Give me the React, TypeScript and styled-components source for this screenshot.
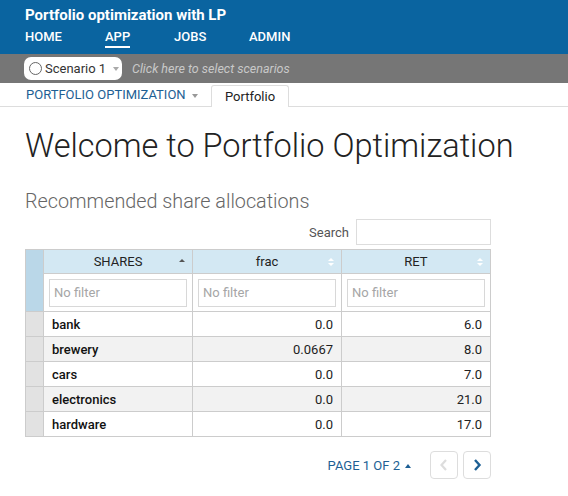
import React from "react";
import styled, { createGlobalStyle } from "styled-components";

const Global = createGlobalStyle`
  html, body { margin: 0; padding: 0; background: #fff; }
  body { font-family: Roboto, "Liberation Sans", sans-serif; color: #222; }
  * { box-sizing: border-box; }
`;

const Header = styled.div`
  background: #0a64a0;
  color: #fff;
  height: 54px;
  padding: 6px 0 0 25px;
`;

const Title = styled.div`
  font-size: 15px;
  font-weight: 700;
  line-height: 18px;
`;

const Nav = styled.div`
  display: flex;
  margin-top: 5px;
`;

const NavItem = styled.div<{ $active?: boolean; $w: number }>`
  width: ${(p) => p.$w}px;
  font-size: 13px;
  font-weight: 500;
  line-height: 16px;
  span {
    display: inline-block;
    padding-bottom: 1px;
    border-bottom: 2px solid ${(p) => (p.$active ? "#fff" : "transparent")};
  }
`;

const ScenarioBar = styled.div`
  background: #767676;
  height: 29px;
  display: flex;
  align-items: center;
  padding-left: 24px;
  gap: 10px;
`;

const Pill = styled.div`
  background: #fff;
  border-radius: 7px;
  height: 23px;
  width: 98px;
  display: flex;
  align-items: center;
  padding-left: 5px;
  font-size: 13px;
  color: #333;
  gap: 3px;
  white-space: nowrap;
`;

const Ring = styled.span`
  flex: none;
  width: 13px;
  height: 13px;
  border: 1.5px solid #666;
  border-radius: 50%;
`;

const Caret = styled.span<{ $color: string }>`
  display: inline-block;
  width: 0;
  height: 0;
  border-left: 3.5px solid transparent;
  border-right: 3.5px solid transparent;
  border-top: 4px solid ${(p) => p.$color};
  margin-left: 6px;
  vertical-align: middle;
`;

const Placeholder = styled.span`
  font-size: 12.5px;
  font-style: italic;
  color: #c9c9c9;
`;

const Tabs = styled.div`
  display: flex;
  align-items: flex-end;
  height: 24px;
  border-bottom: 1px solid #ddd;
  padding-left: 26px;
`;

const MenuTab = styled.div`
  font-size: 13px;
  color: #1d5f94;
  width: 185px;
  height: 100%;
  line-height: 24px;
`;

const Tab = styled.div`
  width: 78px;
  height: 22px;
  border: 1px solid #ddd;
  border-bottom: none;
  border-radius: 3px 3px 0 0;
  background: #fff;
  margin-bottom: -1px;
  text-align: center;
  font-size: 13px;
  line-height: 21px;
  color: #222;
`;

const Main = styled.div`
  padding: 20px 77px 0 25px;
`;

const H1 = styled.h1`
  margin: 0;
  font-size: 32.5px;
  font-weight: 300;
  line-height: 38px;
  color: #222;
  white-space: nowrap;
`;

const H2 = styled.h2`
  margin: 25px 0 0;
  font-size: 19.8px;
  font-weight: 300;
  line-height: 24px;
  color: #666;
`;

const SearchRow = styled.div`
  display: flex;
  justify-content: flex-end;
  align-items: center;
  gap: 7px;
  margin-top: 5px;
  font-size: 13px;
  color: #555;
`;

const SearchBox = styled.div`
  width: 135px;
  height: 26px;
  border: 1px solid #ddd;
`;

const Table = styled.table`
  margin-top: 4px;
  width: 100%;
  border-collapse: collapse;
  table-layout: fixed;
  font-size: 13px;
  td, th { border: 1px solid #ccc; padding: 0; }
`;

const IndexHead = styled.th`
  width: 18px;
  background: #bad7e8;
`;

const HeadCell = styled.th`
  background: #d3e8f3;
  height: 24px;
  font-weight: 400;
  position: relative;
  color: #222;
`;

const SortIcon = styled.svg`
  position: absolute;
  right: 6px;
  top: 7px;
`;

const FilterCell = styled.td`
  height: 38px;
  padding: 0 5px !important;
`;

const FilterInput = styled.div`
  height: 28px;
  border: 1px solid #d8d8d8;
  font-size: 13px;
  color: #a6a6a6;
  line-height: 26px;
  padding-left: 4px;
`;

const IndexCell = styled.td`
  background: #e2e2e2;
`;

const Row = styled.tr<{ $alt: boolean }>`
  height: 25px;
  background: ${(p) => (p.$alt ? "#f2f2f2" : "#fff")};
`;

const NameCell = styled.td`
  font-weight: 500;
  padding-left: 8px !important;
  color: #111;
`;

const NumCell = styled.td`
  text-align: right;
  padding-right: 8px !important;
  color: #222;
`;

const Pager = styled.div`
  display: flex;
  justify-content: flex-end;
  align-items: center;
  margin-top: 14px;
`;

const PageLabel = styled.div`
  font-size: 13px;
  color: #1d5f94;
  margin-right: 14px;
`;

const UpCaret = styled.span`
  display: inline-block;
  width: 0;
  height: 0;
  border-left: 3.5px solid transparent;
  border-right: 3.5px solid transparent;
  border-bottom: 4px solid #1d5f94;
  margin-left: 5px;
  vertical-align: middle;
`;

const PageBtn = styled.div`
  width: 28px;
  height: 28px;
  border: 1px solid #ddd;
  border-radius: 4px;
  display: flex;
  align-items: center;
  justify-content: center;
  margin-left: 5px;
`;

const rows = [
  { name: "bank", frac: "0.0", ret: "6.0" },
  { name: "brewery", frac: "0.0667", ret: "8.0" },
  { name: "cars", frac: "0.0", ret: "7.0" },
  { name: "electronics", frac: "0.0", ret: "21.0" },
  { name: "hardware", frac: "0.0", ret: "17.0" },
];

const Sort = ({ up }: { up?: boolean }) => (
  <SortIcon width="8" height="10" viewBox="0 0 8 10">
    {up ? (
      <path d="M1 5 L4 2 L7 5 Z" fill="#555" />
    ) : (
      <>
        <path d="M1 4 L4 1 L7 4 Z" fill="#fff" />
        <path d="M1 6 L4 9 L7 6 Z" fill="#fff" />
      </>
    )}
  </SortIcon>
);

const App: React.FC = () => (
  <>
    <Global />
    <Header>
      <Title>Portfolio optimization with LP</Title>
      <Nav>
        <NavItem $w={80}><span>HOME</span></NavItem>
        <NavItem $w={69} $active><span>APP</span></NavItem>
        <NavItem $w={75}><span>JOBS</span></NavItem>
        <NavItem $w={80}><span>ADMIN</span></NavItem>
      </Nav>
    </Header>
    <ScenarioBar>
      <Pill>
        <Ring />
        Scenario 1
        <Caret $color="#aaa" style={{ marginLeft: 4 }} />
      </Pill>
      <Placeholder>Click here to select scenarios</Placeholder>
    </ScenarioBar>
    <Tabs>
      <MenuTab>
        PORTFOLIO OPTIMIZATION
        <Caret $color="#999" />
      </MenuTab>
      <Tab>Portfolio</Tab>
    </Tabs>
    <Main>
      <H1>Welcome to Portfolio Optimization</H1>
      <H2>Recommended share allocations</H2>
      <SearchRow>
        Search
        <SearchBox />
      </SearchRow>
      <Table>
        <thead>
          <tr>
            <IndexHead rowSpan={2} />
            <HeadCell>SHARES<Sort up /></HeadCell>
            <HeadCell>frac<Sort /></HeadCell>
            <HeadCell>RET<Sort /></HeadCell>
          </tr>
          <tr>
            {[0, 1, 2].map((i) => (
              <FilterCell key={i}>
                <FilterInput>No filter</FilterInput>
              </FilterCell>
            ))}
          </tr>
        </thead>
        <tbody>
          {rows.map((r, i) => (
            <Row key={r.name} $alt={i % 2 === 1}>
              <IndexCell />
              <NameCell>{r.name}</NameCell>
              <NumCell>{r.frac}</NumCell>
              <NumCell>{r.ret}</NumCell>
            </Row>
          ))}
        </tbody>
      </Table>
      <Pager>
        <PageLabel>
          PAGE 1 OF 2<UpCaret />
        </PageLabel>
        <PageBtn>
          <svg width="10" height="12" viewBox="0 0 10 12">
            <path d="M7 1 L2.5 6 L7 11" stroke="#ddd" strokeWidth="2.2" fill="none" />
          </svg>
        </PageBtn>
        <PageBtn>
          <svg width="10" height="12" viewBox="0 0 10 12">
            <path d="M3 1 L7.5 6 L3 11" stroke="#1d5f94" strokeWidth="2.4" fill="none" />
          </svg>
        </PageBtn>
      </Pager>
    </Main>
  </>
);

export default App;
